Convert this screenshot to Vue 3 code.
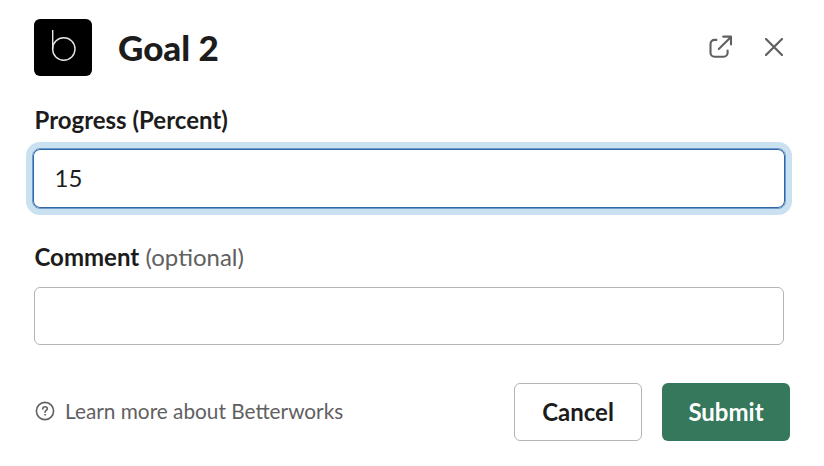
<template>
  <form class="modal" @submit.prevent>
    <!-- Header -->
    <header class="header">
      <div class="app-icon">
        <svg width="58" height="57" viewBox="0 0 58 57" fill="none" stroke="#e6e6e6" stroke-width="1.4">
          <path d="M18.7 11v19.5" />
          <circle cx="29.8" cy="30" r="11.2" />
        </svg>
      </div>
      <h1>Goal 2</h1>
      <button type="button" class="icon-btn" aria-label="Open in new window">
        <svg width="26" height="26" viewBox="0 0 26 26" fill="none" stroke="#616061" stroke-width="2.1" stroke-linecap="round" stroke-linejoin="round">
          <path d="M8.4 5.9H6.5a4 4 0 0 0-4 4v8.9a4 4 0 0 0 4 4h9.1a4 4 0 0 0 4-4v-2.2" />
          <path d="M10.8 15 22.7 3.2M15.2 2.6h7.8v7.8" />
        </svg>
      </button>
      <button type="button" class="icon-btn" aria-label="Close">
        <svg width="18" height="18" viewBox="0 0 18 18" fill="none" stroke="#616061" stroke-width="2.2" stroke-linecap="round">
          <path d="m1 1 16 16M17 1 1 17" />
        </svg>
      </button>
    </header>

    <!-- Fields -->
    <label for="progress">Progress (Percent)</label>
    <input id="progress" v-model="progress" class="field active" type="text" />

    <label for="comment" class="comment-label">Comment <span>(optional)</span></label>
    <input id="comment" v-model="comment" class="field" type="text" />

    <!-- Footer -->
    <footer class="footer">
      <a class="help">
        <svg width="20" height="20" viewBox="0 0 20 20" fill="none" stroke="#616061" stroke-width="1.6" stroke-linecap="round" stroke-linejoin="round">
          <circle cx="10" cy="10" r="8.6" />
          <path d="M7.8 7.9C7.8 6.6 8.7 5.8 10 5.8s2.3.8 2.3 2c0 1.7-2.3 1.6-2.3 3.4" />
          <circle cx="10" cy="13.8" r=".4" fill="#616061" stroke-width="1" />
        </svg>
        <span>Learn more about Betterworks</span>
      </a>
      <button type="button" class="btn">Cancel</button>
      <button type="submit" class="btn primary">Submit</button>
    </footer>
  </form>
</template>

<script setup>
import { ref } from 'vue'

const progress = ref('15')
const comment = ref('')
</script>

<style>
body {
  background: #fff;
}
</style>

<style scoped>
.modal {
  box-sizing: border-box;
  width: 824px;
  height: 466px;
  padding: 19px 34px 0;
  display: flex;
  flex-direction: column;
  font-family: Lato, "Liberation Sans", sans-serif;
  color: #1d1c1d;
}
.header {
  display: flex;
  align-items: center;
  height: 57px;
  padding-right: 7px;
}
.app-icon {
  width: 58px;
  height: 57px;
  border-radius: 6px;
  background: #000;
}
svg {
  display: block;
  flex: none;
}
h1 {
  flex: 1;
  margin: 0 0 2px 26px;
  font-size: 35px;
  line-height: 44px;
  font-weight: 900;
}
.icon-btn {
  margin-bottom: 2px;
  padding: 0;
  border: none;
  background: none;
  cursor: pointer;
}
.icon-btn + .icon-btn {
  margin-left: 31px;
}
label {
  margin: 29px 0 0 .5px;
  height: 30px;
  line-height: 30px;
  font-size: 24px;
  font-weight: 700;
}
label span {
  margin-left: .5px;
  font-weight: 400;
  color: #616061;
}
.field {
  box-sizing: border-box;
  width: 750px;
  height: 58px;
  margin: 15px 0 0;
  padding: 0 20px;
  border: 1px solid #b5b4b5;
  border-radius: 6px;
  outline: none;
  background: #fff;
  font: 24px Lato, "Liberation Sans", sans-serif;
  color: #1d1c1d;
}
.field.active {
  width: 754px;
  height: 61px;
  margin: 13px 0 0 -2px;
  padding: 0 21.5px 2px;
  border: 1px solid #6f9bca;
  border-radius: 8px;
  box-shadow: 0 0 0 6px #c9e1f0, inset 0 0 0 1px #2f66a6;
}
.comment-label {
  margin-top: 33px;
}
.footer {
  display: flex;
  align-items: center;
  width: 756px;
  margin-top: 38px;
}
.help {
  flex: 1;
  display: flex;
  align-items: center;
  gap: 10px;
  margin-left: 1px;
  font-size: 20.8px;
  color: #616061;
}
.help svg {
  margin-bottom: 2px;
}
.help span {
  margin-bottom: 4px;
}
.btn {
  box-sizing: border-box;
  width: 128px;
  height: 58px;
  padding: 0 0 2px;
  border: 1px solid #b5b4b5;
  border-radius: 6px;
  background: #fff;
  font: 700 24px Lato, "Liberation Sans", sans-serif;
  color: #1d1c1d;
  cursor: pointer;
}
.btn.primary {
  margin-left: 20px;
  border: none;
  background: #35785b;
  color: #fff;
}
</style>
